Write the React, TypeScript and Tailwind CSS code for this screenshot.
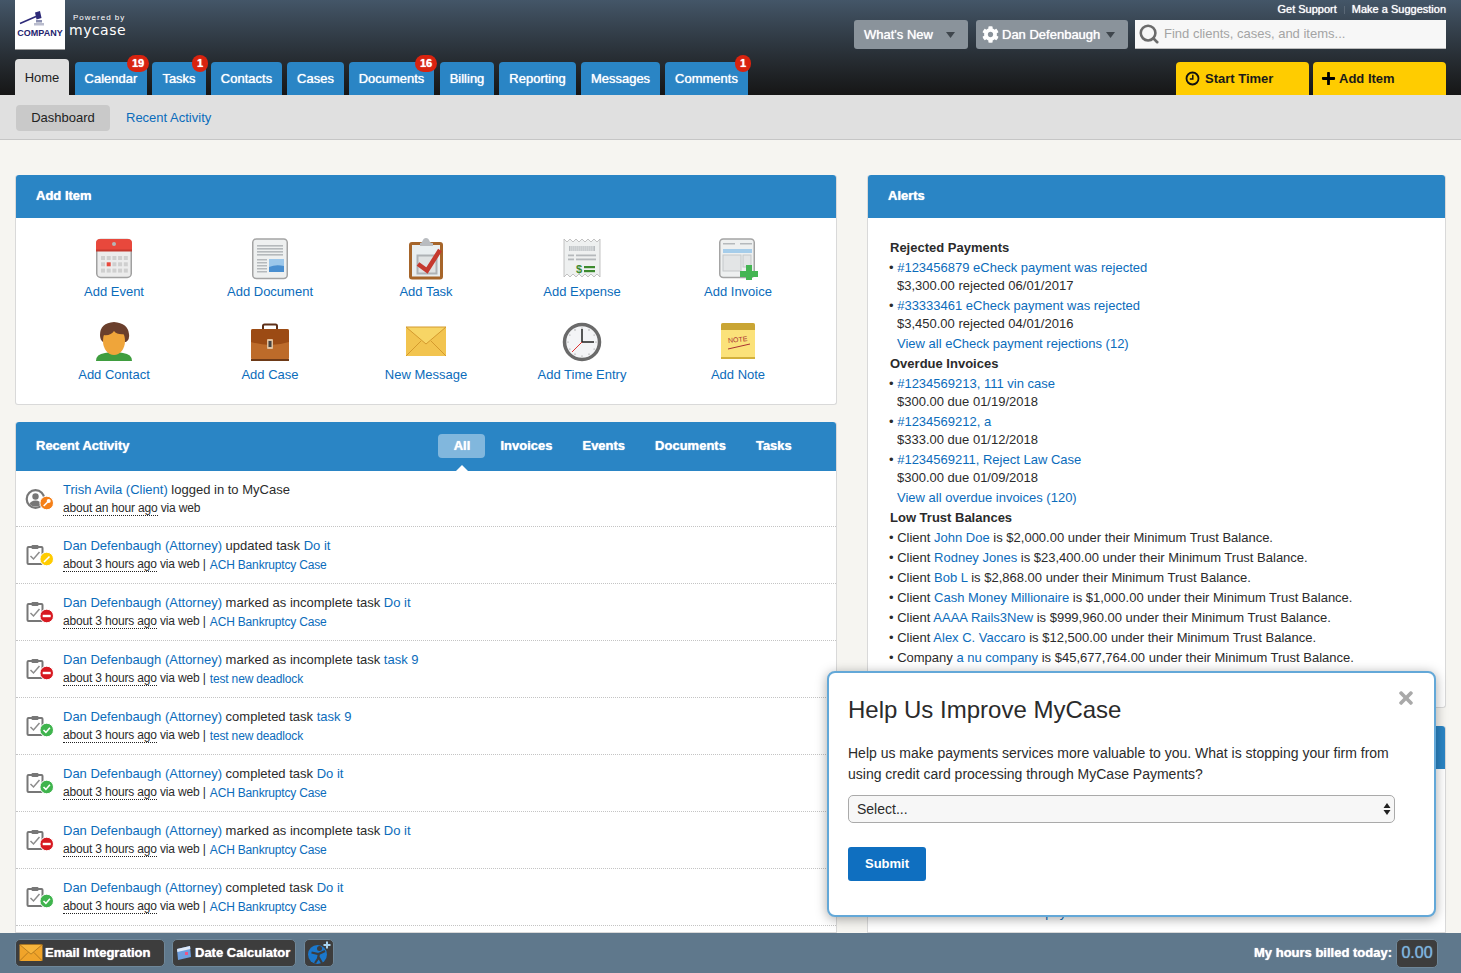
import React from "react";
import { FaCog, FaPlus, FaTimes } from "react-icons/fa";
import { Search } from "lucide-react";

const Link = ({ children, className = "" }: { children: React.ReactNode; className?: string }) => (
  <a className={"text-[#0b6cbb] " + className}>{children}</a>
);

const Caret = ({ className = "" }: { className?: string }) => (
  <svg width="9" height="6" viewBox="0 0 9 6" className={className}>
    <path d="M0 0h9L4.5 6z" fill="#3f464d" />
  </svg>
);

const tabs = [
  { t: "Calendar", w: "w-[72px] mr-0", b: "19", bc: "right-[-2px] w-[22px]" },
  { t: "Tasks", w: "w-[54px] mr-0", b: "1", bc: "right-[-2px] w-[16px]" },
  { t: "Contacts", w: "w-[71px] mr-0" },
  { t: "Cases", w: "w-[57px] mr-0" },
  { t: "Documents", w: "w-[85px] mr-px", b: "16", bc: "right-[-3px] w-[22px]" },
  { t: "Billing", w: "w-[54px] mr-0" },
  { t: "Reporting", w: "w-[77px] mr-0" },
  { t: "Messages", w: "w-[79px] mr-0" },
  { t: "Comments", w: "w-[83px] mr-0", b: "1", bc: "right-[-3px] w-[16px]" },
];

function Gavel() {
  return (
    <svg width="50" height="18" viewBox="0 0 50 18">
      <path d="M5 14.500L21 7.500" stroke="#2d2a78" strokeWidth="1.600" />
      <path d="M20 3.500L25 2l1.500 7-5 1.500z" fill="#2d2a78" />
      <rect x="21" y="11" width="6" height="2.500" fill="#8a8fb0" />
      <rect x="19" y="14" width="10" height="2.500" fill="#b9bccd" />
    </svg>
  );
}

function Header() {
  return (
    <header className="h-[95px] shrink-0 bg-gradient-to-b from-[#445668] to-[#161616] flex flex-col">
      <div className="h-[59px] flex justify-between pl-[15px] pr-[15px]">
        <div className="flex items-start">
          <div className="w-[50px] h-[50px] bg-white border-b border-[#999] flex flex-col items-center pt-[9px]">
            <Gavel />
            <span className="text-[9px] leading-[11px] mt-px font-bold text-[#24246e] font-['Liberation_Sans',sans-serif]">COMPANY</span>
          </div>
          <div className="ml-[4px] pt-[13px] text-white">
            <div className="text-[8px] leading-[10px] tracking-[1px] pl-[4px]">Powered by</div>
            <div className="text-[14px] leading-[14px] tracking-[0.5px] font-['DejaVu_Sans',sans-serif]">mycase</div>
          </div>
        </div>
        <div className="flex flex-col items-end">
          <div className="h-5 flex items-center text-[11px] text-white [text-shadow:0_0_1px_#fff] pb-[1px]">
            <span>Get Support</span>
            <span className="mx-[7px] w-px h-[8px] bg-[#5a6876]" />
            <span>Make a Suggestion</span>
          </div>
          <div className="flex h-[29px]">
            <div className="w-[114px] bg-[#8a939b] rounded-[3px] flex items-center pl-[10px] pr-[13px] justify-between text-[13px] text-white [text-shadow:0_0_1px_#fff]">
              <span>What's New</span>
              <Caret />
            </div>
            <div className="w-[152px] ml-2 bg-[#8a939b] rounded-[3px] flex items-center pl-[6px] text-[13px] text-white [text-shadow:0_0_1px_#fff]">
              <FaCog className="text-[17px] text-white mr-[3px]" />
              <span>Dan Defenbaugh</span>
              <Caret className="ml-[6px]" />
            </div>
            <div className="w-[311px] ml-[7px] bg-[#f7f7f7] border-b border-[#bbb] flex items-center pl-[3px] text-[13px] text-[#a4a4a4]">
              <Search size={22} strokeWidth={2.8} className="text-[#6b6b6b] mr-[4px]" />
              <span>Find clients, cases, and items...</span>
            </div>
          </div>
        </div>
      </div>
      <div className="h-[36px] flex items-end justify-between px-[15px]">
        <nav className="flex items-end gap-[5px] font-['Liberation_Sans',sans-serif]">
          <div className="w-[54px] h-[36px] mr-px pt-[2px] bg-[#e0e0e0] rounded-t-[4px] flex items-center justify-center text-[13px] text-[#222]">Home</div>
          {tabs.map((x) => (
            <div key={x.t} className={"h-[33px] bg-[#2a85c5] rounded-t-[4px] relative flex items-center justify-center text-[13px] text-white [text-shadow:0_0_1px_#fff] " + x.w}>
              {x.t}
              {x.b && (
                <span className={"absolute top-[-7px] h-[17px] rounded-full bg-[#d9230f] flex items-center justify-center text-[11px] font-bold text-white " + x.bc}>{x.b}</span>
              )}
            </div>
          ))}
        </nav>
        <div className="flex gap-1">
          <div className="w-[133px] h-[33px] bg-[#ffcc00] rounded-t-[4px] flex items-center pl-[9px] text-[13px] font-bold text-[#1a1a1a]">
            <svg width="15" height="15" viewBox="0 0 15 15" className="mr-[5px]" fill="none" stroke="#111" strokeWidth="1.8">
              <circle cx="7.5" cy="7.5" r="6" />
              <path d="M7.8 3.8v4.2H4.8" strokeWidth="1.5" />
            </svg>
            Start Timer
          </div>
          <div className="w-[133px] h-[33px] bg-[#ffcc00] rounded-t-[4px] flex items-center pl-2 text-[13px] font-bold text-[#1a1a1a]">
            <FaPlus className="text-[15px] text-black mr-[3px]" />
            Add Item
          </div>
        </div>
      </div>
    </header>
  );
}

const I = ({ children }: { children: React.ReactNode }) => (
  <svg width="44" height="42" viewBox="0 0 44 42">{children}</svg>
);

const IEvent = () => (
  <I>
    <rect x="4.750" y="1.500" width="34.500" height="38" rx="4" fill="#ececec" stroke="#a0a0a0" strokeWidth="1.500" />
    <path d="M4 13V5a4 4 0 0 1 4-4h28a4 4 0 0 1 4 4v8z" fill="#e8483c" />
    <rect x="4" y="11.500" width="36" height="2" fill="#c4392f" />
    <circle cx="22" cy="6" r="2" fill="#b5b5b5" />
    {[0, 1, 2, 3, 4].flatMap((c) =>
      [0, 1, 2].map((r) => (
        <rect key={c + "-" + r} x={9 + c * 5.7} y={18 + r * 6.3} width="4" height="4" fill={c === 1 && r === 1 ? "#e8483c" : "#cfcfcf"} />
      ))
    )}
  </I>
);
const IDoc = () => (
  <I>
    <rect x="4.750" y="1" width="34.500" height="39.500" rx="3.500" fill="#eef0f0" stroke="#a4a4a4" strokeWidth="1.500" />
    {[7, 10, 13, 16].map((y) => <rect key={y} x="9" y={y} width="26" height="1.600" fill="#b5b9bc" />)}
    {[21, 24, 27, 30, 33].map((y) => <rect key={y} x="9" y={y} width="10" height="1.500" fill="#b5b9bc" />)}
    <rect x="21" y="21" width="15" height="13" fill="#9cc7ea" />
    <path d="M21 29q7-3 15-1v6H21z" fill="#4a8fd0" />
  </I>
);
const ITask = () => (
  <I>
    <rect x="5" y="4" width="34" height="37.500" rx="3" fill="#a6652a" />
    <rect x="8" y="7" width="28" height="31.500" fill="#e9eef0" />
    <path d="M16 7V5q2 0 2.500-2 1-3 3.500-3t3.500 3q.5 2 2.500 2h1v3H16z" fill="#b9bcc0" />
    <rect x="13.500" y="17.500" width="19" height="18" fill="#dfe2e3" stroke="#aeb2b5" strokeWidth="2" />
    <path d="M14 26l9 6.500L36 12" fill="none" stroke="#c5392f" strokeWidth="4.500" />
  </I>
);
const IExp = () => (
  <I>
    <path d="M4 1l3 3 3-3 3 3 3-3 3 3 3-3 3 3 3-3 3 3 3-3 3 3 3-3v38l-3-3-3 3-3-3-3 3-3-3-3 3-3-3-3 3-3-3-3 3-3-3-3 3z" fill="#eef0f0" stroke="#b4b4b4" strokeWidth="0.800" />
    <path d="M9 8h26v5H9z" fill="#b9bdc0" />
    {[10.5, 12.5, 14.5, 16.5, 18.5, 20.5, 22.5, 24.5, 26.5, 28.5, 30.5, 32.5].map((x) => <rect key={x} x={x} y="8" width="0.800" height="5" fill="#eef0f0" />)}
    <rect x="8" y="16.500" width="6" height="1.800" fill="#b5b9bc" />
    <rect x="16" y="16.500" width="20" height="1.800" fill="#b5b9bc" />
    <rect x="8" y="20.500" width="6" height="1.800" fill="#b5b9bc" />
    <rect x="16" y="20.500" width="20" height="1.800" fill="#b5b9bc" />
    <text x="19" y="35" fontSize="11" fontWeight="bold" fill="#3c8a2e" fontFamily="Liberation Sans" textAnchor="middle">$</text>
    <rect x="24" y="28" width="11" height="2.200" fill="#3c8a2e" />
    <rect x="24" y="32" width="11" height="2.200" fill="#3c8a2e" />
  </I>
);
const IInv = () => (
  <I>
    <rect x="3.750" y="1" width="34.500" height="38.500" rx="3.500" fill="#eef0f0" stroke="#a4a4a4" strokeWidth="1.500" />
    <rect x="7" y="5" width="12" height="1.500" fill="#b5b9bc" />
    <rect x="24" y="5" width="12" height="1.500" fill="#b5b9bc" />
    <rect x="7" y="11" width="29" height="4" fill="#a6cdea" />
    <rect x="7" y="17" width="18" height="16" fill="#e3e5e6" stroke="#c4c7c9" />
    <rect x="27" y="17" width="8" height="12" fill="#e3e5e6" stroke="#c4c7c9" />
    <path d="M30 27h6v6h6v6h-6v3h-6v-3h-6v-6h6z" fill="#44b553" />
  </I>
);
const IContact = () => (
  <I>
    <path d="M4 40q0-7 9-8 9-2 18 0 9 1 9 8z" fill="#3f9d3f" />
    <path d="M8 14Q8 2 22 1q14 1 15 12 1 5-3 8H11Q8 19 8 14z" fill="#6a3f2c" />
    <ellipse cx="22" cy="20" rx="11" ry="14" fill="#efa53a" />
    <path d="M11 14q8 1 11-4 3 4 11 3-2-9-11-9-9 0-11 10z" fill="#6a3f2c" />
  </I>
);
const ICase = () => (
  <I>
    <path d="M15 9V5q0-1.500 1.500-1.500h11Q29 3.500 29 5v4" fill="none" stroke="#5e3018" strokeWidth="2" />
    <rect x="3" y="8" width="38" height="31" rx="2" fill="#bd6b2a" />
    <path d="M3 10q0-2 2-2h34q2 0 2 2v11q-19 6-38 0z" fill="#9c4b14" />
    <rect x="3" y="38" width="38" height="2" fill="#6e3a17" />
    <rect x="19" y="18" width="6" height="10" rx="1" fill="#e2c09b" />
    <rect x="20.500" y="20" width="3" height="6" fill="#444" />
  </I>
);
const IMail = ({ w = 44, h = 42, body = "#f2c44f", flap = "#f7d565", line = "#d49a2e" }: { w?: number; h?: number; body?: string; flap?: string; line?: string }) => (
  <svg width={w} height={h} viewBox="0 0 44 42">
    <rect x="2" y="6" width="40" height="29" rx="1.500" fill={body} />
    <path d="M2 6h40L22 23z" fill={flap} stroke={line} />
    <path d="M2 35l15-15M42 35L27 20" stroke={line} />
  </svg>
);
const IClock = () => (
  <I>
    <circle cx="22" cy="21" r="17.500" fill="#f3f4f6" stroke="#6a6a6a" strokeWidth="3.500" />
    {[0, 30, 60, 90, 120, 150, 180, 210, 240, 270, 300, 330].map((a) => (
      <circle key={a} cx={22 + 14 * Math.cos((a * Math.PI) / 180)} cy={21 + 14 * Math.sin((a * Math.PI) / 180)} r="0.600" fill="#888" />
    ))}
    <path d="M22 21V8M22 21h12" stroke="#222" strokeWidth="1.500" />
    <path d="M22 21L12 31" stroke="#d33" strokeWidth="1" />
  </I>
);
const INote = () => (
  <I>
    <rect x="5" y="2" width="34" height="36" rx="2" fill="#fbe27a" />
    <path d="M5 9V4q0-2 2-2h30q2 0 2 2v5z" fill="#c9a534" />
    <rect x="5" y="36" width="34" height="2" fill="#d3b13c" />
    <text x="22" y="21" fontSize="7" fill="#a33" fontFamily="Liberation Sans" textAnchor="middle" transform="rotate(-6 22 21)">NOTE</text>
    <path d="M12 28l22-5" stroke="#a33" strokeWidth="1" />
  </I>
);

const addItems = [
  ["Add Event", IEvent],
  ["Add Document", IDoc],
  ["Add Task", ITask],
  ["Add Expense", IExp],
  ["Add Invoice", IInv],
  ["Add Contact", IContact],
  ["Add Case", ICase],
  ["New Message", IMail],
  ["Add Time Entry", IClock],
  ["Add Note", INote],
] as const;

function AddItem() {
  return (
    <section className="bg-white border border-t-0 border-[#d9d9d9] rounded-[3px] h-[230px]">
      <div className="h-[43px] bg-[#2a85c5] rounded-t-[3px] flex items-center pl-5 pb-[2px] text-[13px] font-bold text-white [text-shadow:0_0_1px_#fff]">Add Item</div>
      <div className="grid grid-cols-5 px-5 pt-[20px]">
        {addItems.map(([t, Ic]) => (
          <div key={t} className="h-[83px] flex flex-col items-center">
            <Ic />
            <Link className="text-[13px] leading-[16px] mt-[4px]">{t}</Link>
          </div>
        ))}
      </div>
    </section>
  );
}

const Clip = ({ badge }: { badge: "y" | "r" | "g" }) => (
  <svg width="32" height="28" viewBox="0 0 32 28">
    <rect x="2.500" y="5" width="15" height="17" rx="1" fill="none" stroke="#777" strokeWidth="2" />
    <rect x="6.500" y="3" width="7" height="4" rx="1" fill="#777" />
    <path d="M5.500 14l3 3 6-7" fill="none" stroke="#8c8c8c" strokeWidth="1.500" />
    {badge === "y" && (
      <>
        <circle cx="21.700" cy="17" r="6.800" fill="#ffcc00" stroke="#fff" strokeWidth="1" />
        <path d="M19 20l5.500-5.500" stroke="#fff" strokeWidth="1.600" />
      </>
    )}
    {badge === "r" && (
      <>
        <circle cx="21.700" cy="17" r="6.800" fill="#d71920" stroke="#fff" strokeWidth="1" />
        <rect x="17.700" y="15.800" width="8" height="2.400" fill="#fff" />
      </>
    )}
    {badge === "g" && (
      <>
        <circle cx="21.700" cy="17" r="6.800" fill="#3fb44d" stroke="#fff" strokeWidth="1" />
        <path d="M18.500 17l2.400 2.400 4-4.600" fill="none" stroke="#fff" strokeWidth="1.600" />
      </>
    )}
  </svg>
);
const PersonKey = () => (
  <svg width="32" height="28" viewBox="0 0 32 28">
    <circle cx="10.500" cy="13" r="8.800" fill="#fff" stroke="#777" strokeWidth="2.200" />
    <circle cx="10.500" cy="10.500" r="3.200" fill="#777" />
    <path d="M4.500 18q1.500-3.500 6-3.500t6 3.500q-2.500 2.500-6 2.500t-6-2.500z" fill="#777" />
    <circle cx="21.700" cy="17" r="6.800" fill="#f57f17" stroke="#fff" strokeWidth="1" />
    <path d="M18.700 20l4-4" stroke="#fff" strokeWidth="1.600" />
    <circle cx="23.700" cy="15" r="2" fill="#fff" />
  </svg>
);

const rows: { a: string; r: string; v: string; l: string; c: string; b: "y" | "r" | "g" }[] = [
  { a: "Dan Defenbaugh (Attorney)", r: "updated task", v: "Do it", l: "about 3 hours ago", c: "ACH Bankruptcy Case", b: "y" },
  { a: "Dan Defenbaugh (Attorney)", r: "marked as incomplete task", v: "Do it", l: "about 3 hours ago", c: "ACH Bankruptcy Case", b: "r" },
  { a: "Dan Defenbaugh (Attorney)", r: "marked as incomplete task", v: "task 9", l: "about 3 hours ago", c: "test new deadlock", b: "r" },
  { a: "Dan Defenbaugh (Attorney)", r: "completed task", v: "task 9", l: "about 3 hours ago", c: "test new deadlock", b: "g" },
  { a: "Dan Defenbaugh (Attorney)", r: "completed task", v: "Do it", l: "about 3 hours ago", c: "ACH Bankruptcy Case", b: "g" },
  { a: "Dan Defenbaugh (Attorney)", r: "marked as incomplete task", v: "Do it", l: "about 3 hours ago", c: "ACH Bankruptcy Case", b: "r" },
  { a: "Dan Defenbaugh (Attorney)", r: "completed task", v: "Do it", l: "about 3 hours ago", c: "ACH Bankruptcy Case", b: "g" },
];

const Ago = ({ children }: { children: React.ReactNode }) => (
  <span className="border-b border-dotted border-[#222]">{children}</span>
);

function Activity() {
  return (
    <section className="bg-white border border-t-0 border-[#d9d9d9] rounded-t-[3px] mt-[17px] flex-1">
      <div className="h-[49px] bg-[#2a85c5] rounded-t-[3px] flex items-center pl-5 pb-[2px] relative text-[13px] font-bold text-white [text-shadow:0_0_1px_#fff]">
        <span>Recent Activity</span>
        <div className="ml-[309px] flex items-center">
          <span className="w-[47px] h-[24px] rounded-[4px] bg-[#81b7dd] flex items-center justify-center">All</span>
          <span className="ml-[15px]">Invoices</span>
          <span className="ml-[30px]">Events</span>
          <span className="ml-[30px]">Documents</span>
          <span className="ml-[30px]">Tasks</span>
        </div>
        <span className="absolute left-[440px] bottom-0 w-0 h-0 border-x-[6px] border-x-transparent border-b-[6px] border-b-white" />
      </div>
      <div className="h-[56px] border-b border-dotted border-[#c4c4c4] flex text-[#2b2b2b]">
        <div className="w-[47px] pl-[9px] pt-[15px] shrink-0"><PersonKey /></div>
        <div className="pt-[10px]">
          <div className="text-[13px] leading-[17px]"><Link>Trish Avila (Client)</Link> logged in to MyCase</div>
          <div className="text-[12px] leading-[16px] mt-[2px] tracking-[-0.170px]"><Ago>about an hour ago</Ago> via web</div>
        </div>
      </div>
      {rows.map((r, i) => (
        <div key={i} className="h-[57px] border-b border-dotted border-[#c4c4c4] flex text-[#2b2b2b]">
          <div className="w-[47px] pl-[9px] pt-[15px] shrink-0"><Clip badge={r.b} /></div>
          <div className="pt-[10px]">
            <div className="text-[13px] leading-[17px]"><Link>{r.a}</Link> {r.r} <Link>{r.v}</Link></div>
            <div className="text-[12px] leading-[16px] mt-[2px] tracking-[-0.170px]"><Ago>{r.l}</Ago> via web | <Link className="inline-block translate-y-px ml-px">{r.c}</Link></div>
          </div>
        </div>
      ))}
    </section>
  );
}

const Bul = ({ link, amount }: { link: string; amount: string }) => (
  <>
    <div className="h-[18px] leading-[20px]">• <Link>{link}</Link></div>
    <div className="h-5 leading-[20px] pl-2">{amount}</div>
  </>
);

const trust: [string, string, string][] = [
  ["Client", "John Doe", "$2,000.00"],
  ["Client", "Rodney Jones", "$23,400.00"],
  ["Client", "Bob L", "$2,868.00"],
  ["Client", "Cash Money Millionaire", "$1,000.00"],
  ["Client", "AAAA Rails3New", "$999,960.00"],
  ["Client", "Alex C. Vaccaro", "$12,500.00"],
  ["Company", "a nu company", "$45,677,764.00"],
];

const AlertHead = ({ children }: { children: React.ReactNode }) => (
  <div className="h-5 leading-[20px] font-bold pl-px">{children}</div>
);

function Alerts() {
  return (
    <section className="bg-white border border-t-0 border-[#d9d9d9] rounded-[3px] h-[533px]">
      <div className="h-[43px] bg-[#2a85c5] rounded-t-[3px] flex items-center pl-5 pb-[2px] text-[13px] font-bold text-white [text-shadow:0_0_1px_#fff]">Alerts</div>
      <div className="pl-[21px] pt-[20px] text-[13px] text-[#2b2b2b]">
        <AlertHead>Rejected Payments</AlertHead>
        <Bul link="#123456879 eCheck payment was rejected" amount="$3,300.00 rejected 06/01/2017" />
        <Bul link="#33333461 eCheck payment was rejected" amount="$3,450.00 rejected 04/01/2016" />
        <div className="h-5 leading-[20px] pl-2"><Link>View all eCheck payment rejections (12)</Link></div>
        <AlertHead>Overdue Invoices</AlertHead>
        <Bul link="#1234569213, 111 vin case" amount="$300.00 due 01/19/2018" />
        <Bul link="#1234569212, a" amount="$333.00 due 01/12/2018" />
        <Bul link="#1234569211, Reject Law Case" amount="$300.00 due 01/09/2018" />
        <div className="h-5 leading-[20px] pl-2"><Link>View all overdue invoices (120)</Link></div>
        <AlertHead>Low Trust Balances</AlertHead>
        {trust.map(([k, n, a]) => (
          <div key={n} className="h-5 leading-[20px]">• {k} <Link>{n}</Link> is {a} under their Minimum Trust Balance.</div>
        ))}
      </div>
    </section>
  );
}

function Modal() {
  return (
    <div className="absolute left-[827px] top-[671px] w-[609px] h-[246px] bg-white border-2 border-[#63a8d8] rounded-[8px] shadow-[0_2px_12px_rgba(0,0,0,0.35)] pl-[19px] text-[#2b2b2b]">
      <FaTimes className="absolute right-[18px] top-[15px] text-[20px] text-[#a9a9a9]" />
      <h2 className="text-[24px] leading-[30px] mt-[22px]">Help Us Improve MyCase</h2>
      <p className="text-[14px] leading-[21px] mt-[18px] w-[560px]">Help us make payments services more valuable to you. What is stopping your firm from using credit card processing through MyCase Payments?</p>
      <div className="relative w-[547px] mt-[10px]">
        <select className="w-full h-[28px] appearance-none bg-[#f7f7f7] border border-[#aaa] rounded-[5px] pl-2 text-[14px] text-[#2b2b2b] font-['Liberation_Sans',sans-serif]">
          <option>Select...</option>
        </select>
        <svg width="8" height="12" viewBox="0 0 8 12" className="absolute right-[4px] top-[8px]">
          <path d="M4 0l3.500 5h-7zM4 12L.5 7h7z" fill="#222" />
        </svg>
      </div>
      <div className="w-[78px] h-[34px] mt-6 bg-[#0f6fc0] rounded-[3px] flex items-center justify-center text-[13px] font-bold text-white">Submit</div>
    </div>
  );
}

function BottomBar() {
  const cls = "h-[28px] bg-[#3d3d3d] border border-[#6f8799] rounded-[5px] flex items-center text-[13px] font-bold text-white [text-shadow:0_0_1px_#fff]";
  return (
    <footer className="h-10 shrink-0 bg-[#5f788c] flex items-center justify-between pl-[15px] pr-[23px] relative">
      <div className="flex items-center">
        <div className={cls + " w-[150px] pl-[2px]"}>
          <span className="mr-[1px] flex"><IMail w={26} h={24} body="#f0a42a" flap="#f7b53c" line="#8a5a12" /></span>
          Email Integration
        </div>
        <div className={cls + " w-[124px] ml-[7px] pl-[3px]"}>
          <svg width="16" height="16" viewBox="0 0 16 16" className="mr-[3px]">
            <path d="M1 4l13-3 1 11-13 3z" fill="#6e9fe0" />
            <path d="M1 4l13-3 .4 3-13 3z" fill="#dfe9f7" />
            <rect x="9" y="7" width="3" height="3" fill="#e58" />
          </svg>
          Date Calculator
        </div>
        <div className={cls + " w-[30px] ml-2 justify-center"}>
          <svg width="26" height="26" viewBox="0 0 26 26">
            <circle cx="11.500" cy="14.500" r="9.500" fill="#1b78cc" />
            <circle cx="13.500" cy="8.500" r="2.500" fill="#3d3d3d" />
            <path d="M5.500 12.500l7 1.500 6.500-3M13 13.500l-1 5-3 4.500M12.500 17l3.500 6" fill="none" stroke="#3d3d3d" strokeWidth="2.200" />
            <path d="M21 1.500v7M17.500 5h7" stroke="#a9d3ee" strokeWidth="2" />
          </svg>
        </div>
      </div>
      <div className="flex items-center">
        <span className="text-[13px] font-bold text-white mr-[4px] [text-shadow:0_0_1px_#fff]">My hours billed today:</span>
        <span className="w-[42px] h-[29px] bg-[#3d3d3d] border border-[#6f8799] rounded-[5px] flex items-center justify-center text-[16px] text-[#7cb3dd] [text-shadow:0_0_1px_#7cb3dd]">0.00</span>
      </div>
    </footer>
  );
}

export default function App() {
  return (
    <div className="w-[1461px] h-[973px] overflow-hidden relative flex flex-col bg-[#f6f5f1] font-['Liberation_Sans',Arial,sans-serif]">
      <Header />
      <div className="h-[45px] shrink-0 bg-[#e0e0e0] border-b border-[#c6c6c6] flex items-center pl-4 pt-[2px] text-[13px]">
        <span className="w-[94px] h-[26px] bg-[#c9c9c9] rounded-[4px] flex items-center justify-center text-[#222]">Dashboard</span>
        <Link className="ml-4">Recent Activity</Link>
      </div>
      <main className="flex-1 min-h-0 overflow-hidden flex pl-[15px] pr-[15px] pt-[35px] gap-[30px]">
        <div className="w-[822px] shrink-0 flex flex-col">
          <AddItem />
          <Activity />
        </div>
        <div className="flex-1 flex flex-col">
          <Alerts />
          <section className="mt-[18px] flex-1 bg-white border border-t-0 border-[#d9d9d9] rounded-t-[3px]">
            <div className="h-[43px] bg-[#2a85c5] rounded-t-[3px]" />
            <div className="pl-[129px] pt-[136px] text-[13px] leading-[16px]"><Link>View all payments</Link></div>
          </section>
        </div>
      </main>
      <BottomBar />
      <Modal />
    </div>
  );
}
